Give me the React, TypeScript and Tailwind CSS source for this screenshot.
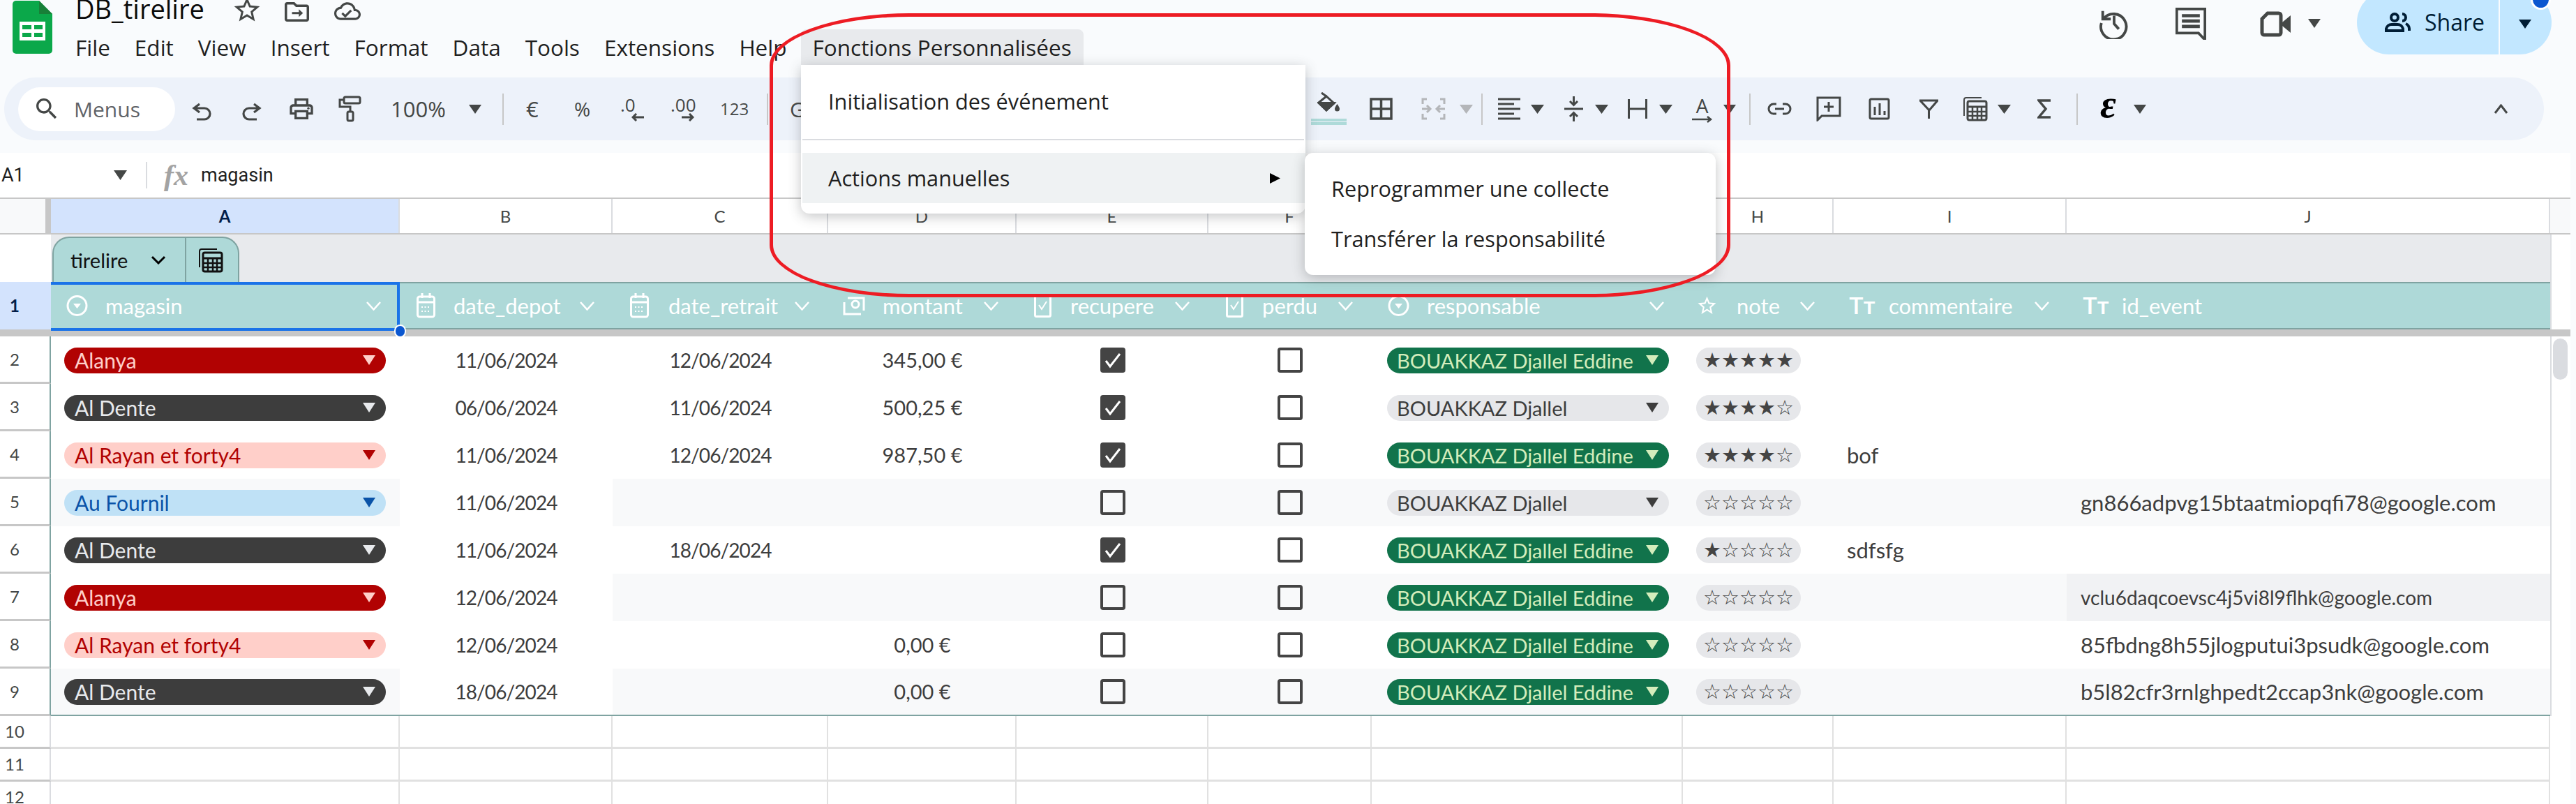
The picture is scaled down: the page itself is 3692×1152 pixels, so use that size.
import React from "react";

const COLS = "grid grid-cols-[73px_500px_305px_309px_270px_275px_234px_446px_216px_334px_693px_29px]";

function Tri({ c }: { c: string }) {
  return (
    <svg viewBox="0 0 18 12" className={"shrink-0 " + c} preserveAspectRatio="none">
      <polygon points="0,0 18,0 9,12" fill="currentColor" />
    </svg>
  );
}

function Ic({ c, v = "0 0 24 24", children, sw = 2 }: { c: string; v?: string; children: React.ReactNode; sw?: number }) {
  return (
    <svg viewBox={v} className={"shrink-0 " + c} fill="none" stroke="currentColor" strokeWidth={sw} preserveAspectRatio="none">
      {children}
    </svg>
  );
}

const STAR = "M22 9.24l-7.19-.62L12 2 9.19 8.63 2 9.24l5.46 4.73L5.82 21 12 17.27 18.18 21l-1.63-7.03L22 9.24zM12 15.4l-3.76 2.27 1-4.28-3.32-2.88 4.38-.38L12 6.1l1.71 4.04 4.38.38-3.32 2.88 1 4.28L12 15.4z";

function CalcIcon({ c }: { c: string }) {
  return (
    <Ic c={c} v="0 0 36 36">
      <path d="M2 28V5a3 3 0 0 1 3-3h22" strokeWidth="2" />
      <rect x="7" y="7" width="27" height="27" rx="2.5" strokeWidth="3" />
      <path d="M8 15h25" strokeWidth="3" />
      <path d="M8 22h25M8 28h25M14 16v17M21 16v17M27 16v17" strokeWidth="2.5" />
    </Ic>
  );
}

function Logo() {
  return (
    <svg viewBox="0 0 57 78" className="w-[57px] h-[78px] shrink-0">
      <path d="M5 1H38L57 20V72a5 5 0 0 1-5 5H5a5 5 0 0 1-5-5V6a5 5 0 0 1 5-5z" fill="#0ba84a" />
      <path d="M38 1L57 20H38z" fill="#188038" />
      <rect x="10" y="31" width="37" height="27" fill="#fff" />
      <rect x="14" y="36" width="13" height="6" fill="#0ba84a" />
      <rect x="31" y="36" width="12" height="6" fill="#0ba84a" />
      <rect x="14" y="47" width="13" height="6" fill="#0ba84a" />
      <rect x="31" y="47" width="12" height="6" fill="#0ba84a" />
    </svg>
  );
}

function TopBar() {
  const items = ["File", "Edit", "View", "Insert", "Format", "Data", "Tools", "Extensions", "Help"];
  return (
    <header className="flex h-[111px] shrink-0">
      <div className="ml-[18px]"><Logo /></div>
      <div className="ml-[33px] flex flex-col">
        <div className="flex h-[24px] text-[#444746]">
          <span className="text-[38px] leading-[24px] text-[#0b0b0b] w-[224px]">DB_tirelire</span>
          <svg viewBox="0 0 24 24" className="w-[44px] h-[44px] -mt-[8px] shrink-0" fill="currentColor"><path d={STAR} /></svg>
          <svg viewBox="0 0 24 24" className="ml-[28px] w-[43px] h-[42px] -mt-[4px] shrink-0" fill="currentColor">
            <path d="M20 6h-8l-2-2H4c-1.1 0-2 .9-2 2v12c0 1.1.9 2 2 2h16c1.1 0 2-.9 2-2V8c0-1.1-.9-2-2-2zm0 12H4V6h5.17l2 2H20v10z" />
            <path d="M8 12.2h5.6v-2.3l3.4 3.1-3.4 3.1v-2.3H8z" />
          </svg>
          <svg viewBox="0 0 24 24" className="ml-[31px] w-[40px] h-[38px] -mt-[3px] shrink-0" fill="currentColor">
            <path d="M19.35 10.04C18.67 6.59 15.64 4 12 4 9.11 4 6.6 5.64 5.35 8.04 2.34 8.36 0 10.91 0 14c0 3.31 2.69 6 6 6h13c2.76 0 5-2.24 5-5 0-2.64-2.05-4.78-4.65-4.96zM19 18H6c-2.21 0-4-1.79-4-4 0-2.05 1.53-3.76 3.56-3.97l1.07-.11.5-.95C8.08 7.14 9.94 6 12 6c2.62 0 4.88 1.86 5.39 4.43l.3 1.5 1.53.11c1.56.1 2.78 1.41 2.78 2.96 0 1.65-1.35 3-3 3zm-9-2.8l-2.09-2.09L6.5 14.5 10 18l6.01-6.01-1.41-1.41z" />
          </svg>
        </div>
        <nav className="mt-[18px] flex items-center h-[51px] gap-[35px] text-[31.5px] text-[#1f1f1f]">
          {items.map((m) => (
            <span key={m}>{m}</span>
          ))}
          <span className="-ml-[15px] h-[51px] px-[17px] flex items-center bg-[#e8eaed] rounded-t-[8px]">Fonctions Personnalisées</span>
        </nav>
      </div>
      <div className="ml-auto mr-[35px] flex items-start text-[#444746]">
        <Ic c="w-[46px] h-[46px] mt-[10px]" sw={2}>
          <path d="M3.5 3v6h6" />
          <path d="M4 9A9.5 9.5 0 1 1 2.5 12" />
          <path d="M12 6.5v6l3.5 4" />
        </Ic>
        <Ic c="ml-[65px] w-[44px] h-[46px] mt-[11px]" sw={2} v="0 0 24 24">
          <path d="M1 1h22v23l-5-5H1z" />
          <path d="M5 6h14M5 10h14M5 14h14" strokeWidth="2.4" />
        </Ic>
        <Ic c="ml-[77px] w-[47px] h-[37px] mt-[16px]" v="0 0 47 37" sw={5}>
          <path d="M11 3h16a3 3 0 0 1 3 3v25a3 3 0 0 1-3 3H6a3 3 0 0 1-3-3V11z" />
          <path d="M32 16l12-10v25l-12-10z" fill="currentColor" stroke="none" />
        </Ic>
        <Tri c="ml-[22px] w-[18px] h-[13px] mt-[27px]" />
        <div className="relative ml-[52px] -mt-[14px] w-[279px] h-[92px] rounded-full bg-[#c2e7ff] flex items-center">
          <Ic c="ml-[40px] w-[37px] h-[28px] text-[#001d35]" v="0 0 37 28" sw={4}>
            <circle cx="14" cy="7" r="5" />
            <path d="M2 26v-3a8 8 0 0 1 8-6h8a8 8 0 0 1 8 6v3z" />
            <path d="M25 2a5 5 0 0 1 0 10M30 16a8 8 0 0 1 5 7v3" />
          </Ic>
          <span className="ml-[20px] text-[32px] font-medium text-[#001d35]">Share</span>
          <div className="absolute left-[203px] top-0 bottom-0 w-[2px] bg-[#f9fbfd]" />
          <Tri c="absolute left-[232px] top-[42px] w-[18px] h-[13px] text-[#001d35]" />
          <div className="absolute left-[249px] -top-[1px] w-[29px] h-[29px] rounded-full bg-[#0b57d0] border-[3px] border-white" />
        </div>
      </div>
    </header>
  );
}

function Divider({ c }: { c: string }) {
  return <div className={"w-[2px] h-[45px] bg-[#c7c7c7] shrink-0 " + c} />;
}

function Toolbar() {
  return (
    <div className="ml-[6px] w-[3640px] h-[90px] shrink-0 bg-[#edf2fa] rounded-[45px] flex items-center text-[#444746]">
      <div className="ml-[20px] w-[225px] h-[63px] rounded-full bg-white flex items-center shrink-0">
        <svg viewBox="0 0 24 24" className="ml-[21px] w-[40px] h-[40px]" fill="currentColor"><path d="M15.5 14h-.79l-.28-.27C15.41 12.59 16 11.11 16 9.5 16 5.91 13.09 3 9.5 3S3 5.91 3 9.5 5.91 16 9.5 16c1.61 0 3.09-.59 4.23-1.57l.27.28v.79l5 4.99L20.49 19l-4.99-5zm-6 0C7.01 14 5 11.99 5 9.5S7.01 5 9.5 5 14 7.01 14 9.5 11.99 14 9.5 14z" /></svg>
        <span className="ml-[19px] text-[30px] text-[#5f6368]">Menus</span>
      </div>
      <Ic c="ml-[24px] w-[28px] h-[26px] mt-[8px]" v="0 0 28 26" sw={3.2}><path d="M11 2L3 8l8 6M3 8h15a7.5 7.5 0 0 1 0 16H7" /></Ic>
      <Ic c="ml-[44px] w-[28px] h-[26px] mt-[8px]" v="0 0 28 26" sw={3.2}><path d="M17 2l8 6-8 6M25 8H10a7.5 7.5 0 0 0 0 16h11" /></Ic>
      <svg viewBox="0 0 24 24" className="ml-[37px] mr-[-2px] w-[40px] h-[40px] shrink-0" fill="currentColor">
        <path d="M19 8h-1V3H6v5H5c-1.66 0-3 1.34-3 3v6h4v4h12v-4h4v-6c0-1.66-1.34-3-3-3zM8 5h8v3H8V5zm8 12v2H8v-4h8v2zm2-2v-2H6v2H4v-4c0-.55.45-1 1-1h14c.55 0 1 .45 1 1v4h-2z" />
        <circle cx="18" cy="11.5" r="1" />
      </svg>
      <Ic c="ml-[35px] w-[33px] h-[38px]" v="0 0 33 38" sw={3}>
        <rect x="8" y="2" width="23" height="9" rx="2" />
        <path d="M8 6H2v10h15v6" />
        <rect x="13" y="23" width="8" height="13" rx="2" />
      </Ic>
      <span className="ml-[42px] w-[82px] text-[31px] shrink-0">100%</span>
      <Tri c="ml-[30px] w-[18px] h-[13px]" />
      <Divider c="ml-[30px]" />
      <span className="ml-[32px] w-[19px] text-[31px] shrink-0">€</span>
      <span className="ml-[50px] w-[24px] text-[28px] shrink-0">%</span>
      <div className="ml-[42px] w-[36px] flex flex-col items-start shrink-0">
        <span className="text-[26px] leading-[24px] font-medium">.0</span>
        <Ic c="ml-[16px] w-[18px] h-[12px]" v="0 0 18 12" sw={3}><path d="M7 1L2 6l5 5M2 6h16" /></Ic>
      </div>
      <div className="ml-[36px] w-[36px] flex flex-col items-start shrink-0">
        <span className="text-[26px] leading-[24px] font-medium">.00</span>
        <Ic c="ml-[16px] w-[18px] h-[12px]" v="0 0 18 12" sw={3}><path d="M11 1l5 5-5 5M16 6H0" /></Ic>
      </div>
      <span className="ml-[35px] w-[40px] text-[24px] shrink-0">123</span>
      <Divider c="ml-[27px]" />
      <span className="ml-[31px] w-[16px] text-[30px] shrink-0">G</span>
      <div className="ml-[731px] w-[51px] h-[47px] -mt-[2px] flex flex-col shrink-0">
        <Ic c="ml-[9px] w-[33px] h-[32px]" v="0 0 33 32" sw={3}>
          <path d="M2 15L13 6l11 10-11 10z" />
          <path d="M2 15.5h22L13 26z" fill="currentColor" />
          <path d="M6 1l7 5" />
          <path d="M28.5 17c-2 3-3.5 5-3.5 7a3.5 3.5 0 0 0 7 0c0-2-1.5-4-3.5-7z" fill="currentColor" stroke="none" />
        </Ic>
        <div className="mt-[6px] h-[4px] bg-[#aedad9]" />
        <div className="mt-[1px] h-[4px] bg-[#aedad9]" />
      </div>
      <Ic c="ml-[33px] w-[33px] h-[32px]" v="0 0 33 32" sw={3.5}>
        <rect x="2" y="2" width="29" height="28" />
        <path d="M16.5 2v28M2 16h29" />
      </Ic>
      <Ic c="ml-[41px] w-[35px] h-[32px] text-[#b4b6b9]" v="0 0 35 32" sw={3}>
        <path d="M8 2H2v7M27 2h6v7M8 30H2v-7M27 30h6v-7" />
        <path d="M1 16h11M8 11l5 5-5 5M34 16H23M27 11l-5 5 5 5" />
      </Ic>
      <Tri c="ml-[20px] w-[19px] h-[13px] text-[#b4b6b9]" />
      <Divider c="ml-[12px]" />
      <Ic c="ml-[22px] w-[32px] h-[32px]" v="0 0 32 32" sw={3}>
        <path d="M0 2h32M0 9h23M0 16h32M0 23h23M0 30h32" />
      </Ic>
      <Tri c="ml-[15px] w-[19px] h-[13px]" />
      <Ic c="ml-[29px] w-[27px] h-[36px]" v="0 0 27 36" sw={3}>
        <path d="M0 18h27M13.5 0v11M8 7l5.5 5.5L19 7M13.5 36V25M8 29l5.5-5.5L19 29" />
      </Ic>
      <Tri c="ml-[17px] w-[19px] h-[13px]" />
      <Ic c="ml-[28px] w-[28px] h-[28px]" v="0 0 28 28" sw={3}>
        <path d="M1.5 0v28M26.5 0v28M2 14h24" />
      </Ic>
      <Tri c="ml-[17px] w-[19px] h-[13px]" />
      <div className="ml-[28px] w-[29px] h-[40px] flex flex-col items-center shrink-0">
        <span className="text-[28px] leading-[30px]">A</span>
        <Ic c="w-[29px] h-[10px]" v="0 0 29 10" sw={2.5}><path d="M0 5h27M22 1l5 4-5 4" /></Ic>
      </div>
      <Tri c="ml-[16px] w-[18px] h-[13px]" />
      <Divider c="ml-[19px]" />
      <Ic c="ml-[24px] w-[35px] h-[18px]" v="0 0 35 18" sw={3}>
        <path d="M13 2H9a7 7 0 0 0 0 14h4M22 2h4a7 7 0 0 1 0 14h-4M11 9h13" />
      </Ic>
      <Ic c="ml-[35px] w-[36px] h-[36px]" v="0 0 36 36" sw={3}>
        <path d="M2 2h32v26H8l-6 6zM18 8v14M11 15h14" />
      </Ic>
      <Ic c="ml-[39px] w-[31px] h-[32px]" v="0 0 31 32" sw={3}>
        <rect x="2" y="2" width="27" height="28" rx="2" />
        <path d="M9 13v12M16 8v17M23 19v6" />
      </Ic>
      <Ic c="ml-[42px] w-[27px] h-[28px]" v="0 0 27 28" sw={3}>
        <path d="M1 2h25l-12 14zM13.5 15v13" />
      </Ic>
      <CalcIcon c="ml-[35px] w-[36px] h-[36px]" />
      <Tri c="ml-[14px] w-[19px] h-[13px]" />
      <Ic c="ml-[38px] w-[19px] h-[28px]" v="0 0 19 28" sw={3.5}>
        <path d="M19 2H2l10 12L2 26h17" />
      </Ic>
      <Divider c="ml-[37px]" />
      <span className="ml-[32px] w-[20px] text-[56px] font-bold italic text-black leading-none -mt-[14px] font-['Liberation_Serif',serif] shrink-0">ε</span>
      <Tri c="ml-[28px] w-[18px] h-[13px]" />
      <Ic c="ml-[498px] w-[21px] h-[14px]" v="0 0 21 14" sw={3}><path d="M2 13l8.5-11L19 13" /></Ic>
    </div>
  );
}

function FormulaBar() {
  return (
    <div className="mt-[18px] w-[3684px] h-[64px] shrink-0 bg-white flex items-center text-[#1f1f1f]">
      <span className="ml-[2px] w-[161px] text-[27px] shrink-0 font-['Roboto',sans-serif]">A1</span>
      <Tri c="w-[19px] h-[14px] text-[#444746]" />
      <div className="ml-[27px] w-[2px] h-[38px] bg-[#dadce0] shrink-0" />
      <span className="ml-[24px] w-[53px] text-[42px] italic font-bold text-[#a3a3a3] font-['Liberation_Serif',serif] leading-none shrink-0">fx</span>
      <span className="text-[27px] shrink-0 font-['Roboto',sans-serif]">magasin</span>
    </div>
  );
}

const COL_LETTERS = ["A", "B", "C", "D", "E", "F", "G", "H", "I", "J"];

function ColumnHeaders() {
  return (
    <div className={COLS + " h-[53px] border-y-[2px] border-[#c7c7c7] bg-white text-[24px] text-[#444746]"}>
      <div className="flex">
        <div className="w-[65px] bg-[#f8f9fa]" />
        <div className="w-[8px] bg-[#c7c7c7]" />
      </div>
      {COL_LETTERS.map((l) => (
        <div
          key={l}
          className={
            "flex items-center justify-center border-r-[2px] border-[#dadce0] " +
            (l === "A" ? "bg-[#d3e3fd] text-[#041e49] font-bold" : "")
          }
        >
          {l}
        </div>
      ))}
      <div className="bg-[#f8f9fa]" />
    </div>
  );
}

function TabRow() {
  return (
    <div className={COLS + " h-[68px]"}>
      <div className="bg-white" />
      <div className="col-span-10 bg-[#e8eaed] flex items-end">
        <div className="ml-[2px] w-[268px] h-[65px] bg-[#aed9d8] border-x-[2px] border-t-[2px] border-[#7fa3a1] rounded-t-[24px] flex items-center">
          <span className="ml-[24px] w-[115px] text-[29px] text-[#111]">tirelire</span>
          <Ic c="w-[22px] h-[13px] text-black" v="0 0 22 13" sw={3}><path d="M2 2l9 9 9-9" /></Ic>
          <div className="ml-[27px] w-[2px] h-full bg-[#7fa3a1]" />
          <CalcIcon c="ml-[17px] w-[36px] h-[36px] text-[#111]" />
        </div>
      </div>
      <div className="bg-white border-l-[2px] border-[#dadce0]" />
    </div>
  );
}

function HIconDrop() {
  return (
    <Ic c="w-[33px] h-[30px]" v="0 0 33 30" sw={3}>
      <circle cx="16.5" cy="15" r="13.5" />
      <path d="M11 12h11l-5.5 7z" fill="currentColor" stroke="none" />
    </Ic>
  );
}
function HIconCal() {
  return (
    <Ic c="w-[27px] h-[36px]" v="0 0 27 36" sw={3}>
      <rect x="1.5" y="5" width="24" height="29" rx="3" />
      <path d="M8 0v7M19 0v7M2 13h23" />
      <path d="M7 20h13M7 26h13" strokeDasharray="2 2.5" strokeWidth="2" />
    </Ic>
  );
}
function HIconMoney() {
  return (
    <Ic c="w-[32px] h-[27px]" v="0 0 32 27" sw={3}>
      <path d="M7 2h23v18" />
      <path d="M2 8v17h24" />
      <circle cx="18" cy="11" r="5" />
    </Ic>
  );
}
function HIconCheck() {
  return (
    <Ic c="w-[25px] h-[33px]" v="0 0 25 33" sw={3}>
      <rect x="1.5" y="1.5" width="22" height="30" rx="2" />
      <path d="M7 15l4 6 7-11" strokeWidth="2" />
    </Ic>
  );
}
function HIconStar() {
  return (
    <svg viewBox="0 0 24 24" className="w-[31px] h-[32px] shrink-0" fill="currentColor" preserveAspectRatio="none">
      <path d={STAR} />
    </svg>
  );
}
function HIconT() {
  return <span className="w-[31px] text-[34px] font-medium leading-none shrink-0 font-['Roboto',sans-serif]">Tт</span>;
}

const HEADERS: { pad: string; gap: string; icon: React.ReactNode; label: string; chev: string | null }[] = [
  { pad: "pl-[21px] pr-[26px]", gap: "ml-[24px]", icon: <HIconDrop />, label: "magasin", chev: "x" },
  { pad: "pl-[24px] pr-[25px]", gap: "ml-[26px]", icon: <HIconCal />, label: "date_depot", chev: "x" },
  { pad: "pl-[25px] pr-[26px]", gap: "ml-[28px]", icon: <HIconCal />, label: "date_retrait", chev: "x" },
  { pad: "pl-[21px] pr-[25px]", gap: "ml-[25px]", icon: <HIconMoney />, label: "montant", chev: "x" },
  { pad: "pl-[25px] pr-[26px]", gap: "ml-[27px]", icon: <HIconCheck />, label: "recupere", chev: "x" },
  { pad: "pl-[25px] pr-[26px]", gap: "ml-[27px]", icon: <HIconCheck />, label: "perdu", chev: "x" },
  { pad: "pl-[22px] pr-[26px]", gap: "ml-[24px]", icon: <HIconDrop />, label: "responsable", chev: "x" },
  { pad: "pl-[19px] pr-[26px]", gap: "ml-[27px]", icon: <HIconStar />, label: "note", chev: "x" },
  { pad: "pl-[22px] pr-[24px]", gap: "ml-[26px]", icon: <HIconT />, label: "commentaire", chev: "x" },
  { pad: "pl-[23px]", gap: "ml-[25px]", icon: <HIconT />, label: "id_event", chev: null },
];

function HeaderRow() {
  return (
    <div className={COLS + " h-[68px]"}>
      <div className="bg-[#d3e3fd] flex items-center text-[24px] font-bold text-[#041e49]">
        <span className="w-[42px] text-center">1</span>
      </div>
      {HEADERS.map((h) => (
        <div
          key={h.label}
          className={"bg-[#aed9d8] border-y-[2px] border-[#7fa3a1] flex items-center text-white text-[31px] " + h.pad}
        >
          {h.icon}
          <span className={h.gap}>{h.label}</span>
          {h.chev && (
            <Ic c="ml-auto w-[23px] h-[13px]" v="0 0 23 13" sw={2.6}><path d="M2 1l9.5 10.5L21 1" /></Ic>
          )}
        </div>
      ))}
      <div className="bg-white border-l-[2px] border-[#dadce0]" />
    </div>
  );
}

type ChipKind = "red" | "dark" | "pink" | "blue" | "green" | "gray";
const CHIP: Record<ChipKind, string> = {
  red: "bg-[#b10202] text-[#ffcfc9] pl-[15px] text-[30px]",
  dark: "bg-[#3d3d3d] text-[#e8eaed] pl-[15px] text-[30px]",
  pink: "bg-[#ffcfc9] text-[#b10202] pl-[15px] text-[30px]",
  blue: "bg-[#bfe1f6] text-[#0a53a8] pl-[15px] text-[30px]",
  green: "bg-[#11734b] text-[#d4edbc] pl-[14px] text-[29px]",
  gray: "bg-[#e6e7ea] text-[#3d3d3d] pl-[14px] text-[29px]",
};

function Chip({ kind, text }: { kind: ChipKind; text: string }) {
  return (
    <div className={"h-[37px] w-full rounded-full flex items-center pr-[15px] " + CHIP[kind]}>
      <span className="whitespace-nowrap leading-[37px]">{text}</span>
      <Tri c="ml-auto w-[18px] h-[14px]" />
    </div>
  );
}

function Box({ on }: { on: boolean }) {
  return on ? (
    <div className="w-[36px] h-[36px] rounded-[4px] bg-[#444] flex items-center justify-center">
      <Ic c="w-[26px] h-[26px] text-white" v="0 0 26 26" sw={3}><path d="M3 14l6 8L23 4" /></Ic>
    </div>
  ) : (
    <div className="w-[36px] h-[36px] rounded-[4px] border-[4px] border-[#444]" />
  );
}

type Row = {
  n: number;
  mag: [ChipKind, string];
  shadeA?: boolean;
  shade?: boolean;
  depot: string;
  retrait?: string;
  montant?: string;
  rec: boolean;
  per: boolean;
  green: boolean;
  stars: string;
  com?: string;
  id?: string;
  small?: boolean;
};

const GREEN = "BOUAKKAZ Djallel Eddine";
const ROWS: Row[] = [
  { n: 2, mag: ["red", "Alanya"], depot: "11/06/2024", retrait: "12/06/2024", montant: "345,00 €", rec: true, per: false, green: true, stars: "★★★★★" },
  { n: 3, mag: ["dark", "Al Dente"], depot: "06/06/2024", retrait: "11/06/2024", montant: "500,25 €", rec: true, per: false, green: false, stars: "★★★★☆" },
  { n: 4, mag: ["pink", "Al Rayan et forty4"], depot: "11/06/2024", retrait: "12/06/2024", montant: "987,50 €", rec: true, per: false, green: true, stars: "★★★★☆", com: "bof" },
  { n: 5, mag: ["blue", "Au Fournil"], shadeA: true, shade: true, depot: "11/06/2024", rec: false, per: false, green: false, stars: "☆☆☆☆☆", id: "gn866adpvg15btaatmiopqfi78@google.com" },
  { n: 6, mag: ["dark", "Al Dente"], depot: "11/06/2024", retrait: "18/06/2024", rec: true, per: false, green: true, stars: "★☆☆☆☆", com: "sdfsfg" },
  { n: 7, mag: ["red", "Alanya"], shade: true, depot: "12/06/2024", rec: false, per: false, green: true, stars: "☆☆☆☆☆", id: "vclu6daqcoevsc4j5vi8l9flhk@google.com", small: true },
  { n: 8, mag: ["pink", "Al Rayan et forty4"], depot: "12/06/2024", montant: "0,00 €", rec: false, per: false, green: true, stars: "☆☆☆☆☆", id: "85fbdng8h55jlogputui3psudk@google.com" },
  { n: 9, mag: ["dark", "Al Dente"], shadeA: true, shade: true, depot: "18/06/2024", montant: "0,00 €", rec: false, per: false, green: true, stars: "☆☆☆☆☆", id: "b5l82cfr3rnlghpedt2ccap3nk@google.com" },
];

function DataRow({ r }: { r: Row }) {
  const last = r.n === 9;
  const s = r.shade ? "bg-[#f8f9fa]" : "bg-white";
  const edge = last ? " border-b-[2px] border-[#7fa3a1]" : "";
  const cell = "flex items-center min-w-0 text-[#3d3d3d] " + edge;
  const date = "text-[28px] tracking-[-0.9px] justify-center ";
  return (
    <div className={COLS + " h-[68px]"}>
      <div className="flex items-center bg-white border-b-[3px] border-[#c7c7c7] border-r-[2px] border-r-[#7fa3a1] text-[24px] text-[#444746]">
        <span className="w-[42px] text-center">{r.n}</span>
      </div>
      <div className={"flex items-center pl-[19px] pr-[20px] " + (r.shadeA ? "bg-[#f8f9fa]" : "bg-white") + edge}>
        <Chip kind={r.mag[0]} text={r.mag[1]} />
      </div>
      <div className={cell + " bg-white " + date}>{r.depot}</div>
      <div className={cell + " " + date + s}>{r.retrait}</div>
      <div className={cell + " justify-center text-[29px] " + s}>{r.montant}</div>
      <div className={cell + " justify-center " + s}><Box on={r.rec} /></div>
      <div className={cell + " justify-center " + s}><Box on={r.per} /></div>
      <div className={cell + " pl-[22px] pr-[20px] " + s}>
        <Chip kind={r.green ? "green" : "gray"} text={r.green ? GREEN : "BOUAKKAZ Djallel"} />
      </div>
      <div className={cell + " pl-[19px] " + s}>
        <div className="w-[150px] h-[37px] rounded-full bg-[#e6e7ea] flex items-center justify-center text-[29px] leading-none text-[#444] font-['DejaVu_Sans',sans-serif]">
          {r.stars}
        </div>
      </div>
      <div className={cell + " pl-[19px] text-[31px] " + s}>{r.com}</div>
      {r.small ? (
        <div className={cell + " pl-[20px] whitespace-nowrap text-[28px] bg-[#f1f2f4]"}>{r.id}</div>
      ) : (
        <div className={cell + " pl-[20px] whitespace-nowrap text-[31px] " + s}>{r.id}</div>
      )}
      <div className="bg-white border-l-[2px] border-[#dadce0]" />
    </div>
  );
}

function EmptyRow({ n }: { n: number }) {
  return (
    <div className={COLS + " h-[47px]"}>
      <div className="flex items-center bg-white border-b-[3px] border-[#c7c7c7] border-r-[2px] border-r-[#dadce0] text-[24px] text-[#444746]">
        <span className="w-[42px] text-center">{n}</span>
      </div>
      {COL_LETTERS.map((l) => (
        <div key={l} className="bg-white border-b-[3px] border-r-[2px] border-[#e1e1e1]" />
      ))}
      <div className="bg-white" />
    </div>
  );
}

function Menus() {
  return (
    <>
      <div className="absolute left-[1148px] top-[93px] w-[723px] h-[213px] bg-white rounded-b-[12px] shadow-[0_4px_18px_rgba(60,64,67,0.3)] text-[30.7px] text-[#1f1f1f]">
        <div className="h-[106px] flex items-center pl-[39px] pb-[2px]">Initialisation des événement</div>
        <div className="mx-[2px] h-[2px] bg-[#dadce0]" />
        <div className="mt-[18px] ml-[2px] h-[72px] bg-[#eff2f3] flex items-center pl-[37px]">
          Actions manuelles
          <svg viewBox="0 0 15 15" className="ml-auto mr-[36px] w-[15px] h-[15px]"><polygon points="0,0 15,7.5 0,15" fill="#000" /></svg>
        </div>
      </div>
      <div className="absolute left-[1870px] top-[219px] w-[589px] h-[175px] bg-white rounded-[12px] shadow-[0_4px_18px_rgba(60,64,67,0.3)] text-[30.7px] text-[#1f1f1f] pl-[38px] pt-[15px]">
        <div className="h-[72px] flex items-center">Reprogrammer une collecte</div>
        <div className="h-[73px] flex items-center">Transférer la responsabilité</div>
      </div>
    </>
  );
}

export default function App() {
  return (
    <div className="relative w-[3692px] h-[1152px] overflow-hidden bg-[#f9fbfd] flex flex-col font-['Open_Sans',sans-serif]">
      <TopBar />
      <Toolbar />
      <FormulaBar />
      <div className="w-[3684px] shrink-0 font-['Lato',sans-serif]">
        <ColumnHeaders />
        <TabRow />
        <HeaderRow />
        <div className="h-[10px] bg-[#c7c7c7]" />
        {ROWS.map((r) => (
          <DataRow key={r.n} r={r} />
        ))}
        {[10, 11, 12].map((n) => (
          <EmptyRow key={n} n={n} />
        ))}
      </div>
      {/* selection */}
      <div className="absolute left-[73px] top-[404px] w-[500px] h-[70px] border-[4px] border-[#1a73e8] border-l-0" />
      <div className="absolute left-[565px] top-[465px] w-[17px] h-[19px] rounded-full bg-[#0b57d0] border-[2px] border-white" />
      {/* scrollbar thumb */}
      <div className="absolute left-[3659px] top-[485px] w-[21px] h-[59px] rounded-full bg-[#dadce0]" />
      <Menus />
      {/* annotation */}
      <div className="absolute left-[1103px] top-[19px] w-[1377px] h-[407px] border-[5px] border-[#ed1c24] rounded-[200px/75px] pointer-events-none" />
    </div>
  );
}
